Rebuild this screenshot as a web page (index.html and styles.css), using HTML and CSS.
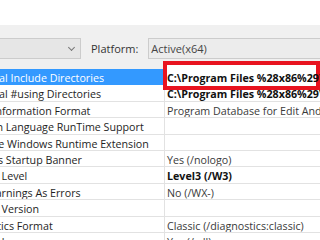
FILE: index.html
```html
<!DOCTYPE html>
<html lang="en">
<head>
  <meta charset="UTF-8" />
  <title>Property Pages</title>
  <link rel="stylesheet" href="styles.css">
</head>
<body>
  <div class="blank"></div>

  <div class="toolbar">
    <div class="combo config"><span class="chev"></span></div>
    <span class="tb-label">Platform:</span>
    <div class="combo platform">Active(x64)</div>
  </div>

  <div class="grid">
    <div class="row selected">
      <div class="name">Additional Include Directories</div>
      <div class="value bold"><span class="mark"><span class="mark-text">C:\Program Files %28x86%29\Windows Kits</span></span></div>
    </div>
    <div class="row">
      <div class="name">Additional #using Directories</div>
      <div class="value bold">C:\Program Files %28x86%29\Windows Kits</div>
    </div>
    <div class="row">
      <div class="name">Debug Information Format</div>
      <div class="value">Program Database for Edit And Continue (/ZI)</div>
    </div>
    <div class="row">
      <div class="name">Common Language RunTime Support</div>
      <div class="value"></div>
    </div>
    <div class="row">
      <div class="name">Consume Windows Runtime Extension</div>
      <div class="value"></div>
    </div>
    <div class="row">
      <div class="name">Suppress Startup Banner</div>
      <div class="value">Yes (/nologo)</div>
    </div>
    <div class="row">
      <div class="name">Warning Level</div>
      <div class="value bold">Level3 (/W3)</div>
    </div>
    <div class="row">
      <div class="name">Treat Warnings As Errors</div>
      <div class="value">No (/WX-)</div>
    </div>
    <div class="row">
      <div class="name">Warning Version</div>
      <div class="value"></div>
    </div>
    <div class="row">
      <div class="name">Diagnostics Format</div>
      <div class="value">Classic (/diagnostics:classic)</div>
    </div>
    <div class="row">
      <div class="name">SDL checks</div>
      <div class="value">Yes (/sdl)</div>
    </div>
  </div>
</body>
</html>
```

FILE: styles.css
```css
body {
  font-family: "Open Sans", "Noto Sans", sans-serif;
  font-size: 10.7px;
  margin: 0;
  background: #fff;
  color: #1e1e1e;
  overflow: hidden;
  width: 320px;
  height: 240px;
}
.blank {
  height: 25px;
  background: #fff;
}
.toolbar {
  height: 44px;
  box-sizing: border-box;
  padding-top: 13px;
  background: #f0f0f0;
  display: flex;
  align-items: flex-start;
  gap: 10px;
}
.combo {
  height: 21px;
  box-sizing: border-box;
  border: 1px solid #cccccc;
  background: #e6e6e6;
  display: flex;
  align-items: center;
  white-space: nowrap;
  color: #444;
}
.config {
  width: 92px;
  margin-left: -11px;
  justify-content: flex-end;
  padding-right: 6px;
}
.chev {
  width: 4px;
  height: 4px;
  border-right: 1px solid #777;
  border-bottom: 1px solid #777;
  transform: rotate(45deg);
  margin-top: -3px;
}
.tb-label {
  line-height: 21px;
  color: #333;
  font-size: 11px;
}
.platform {
  flex: 1;
  padding-left: 2px;
  background: #ececec;
  margin-right: -10px;
  font-size: 11px;
}
.grid {
  margin-left: -45px;
}
.row {
  display: grid;
  grid-template-columns: 209px 1fr;
  height: 16.4px;
  box-sizing: border-box;
  border-bottom: 1px solid #e2e2e2;
  white-space: nowrap;
}
.name, .value {
  overflow: hidden;
  line-height: 14px;
  padding-top: 2px;
}
.name {
  padding-left: 2px;
}
.value {
  border-left: 1px solid #e2e2e2;
  padding-left: 2px;
  color: #3a3a3a;
}
.bold {
  font-weight: bold;
  color: #111;
}
.selected .name {
  background: #3399ff;
  color: #fff;
}
.selected .value {
  overflow: visible;
  border-left-color: #fff;
}
.mark {
  position: relative;
  display: inline-block;
}
.mark::before {
  content: "";
  position: absolute;
  left: -4px;
  top: -10px;
  width: 157px;
  height: 29px;
  box-sizing: border-box;
  border: 4px solid #e8131f;
  background: #fff;
}
.mark-text {
  position: relative;
}
```
